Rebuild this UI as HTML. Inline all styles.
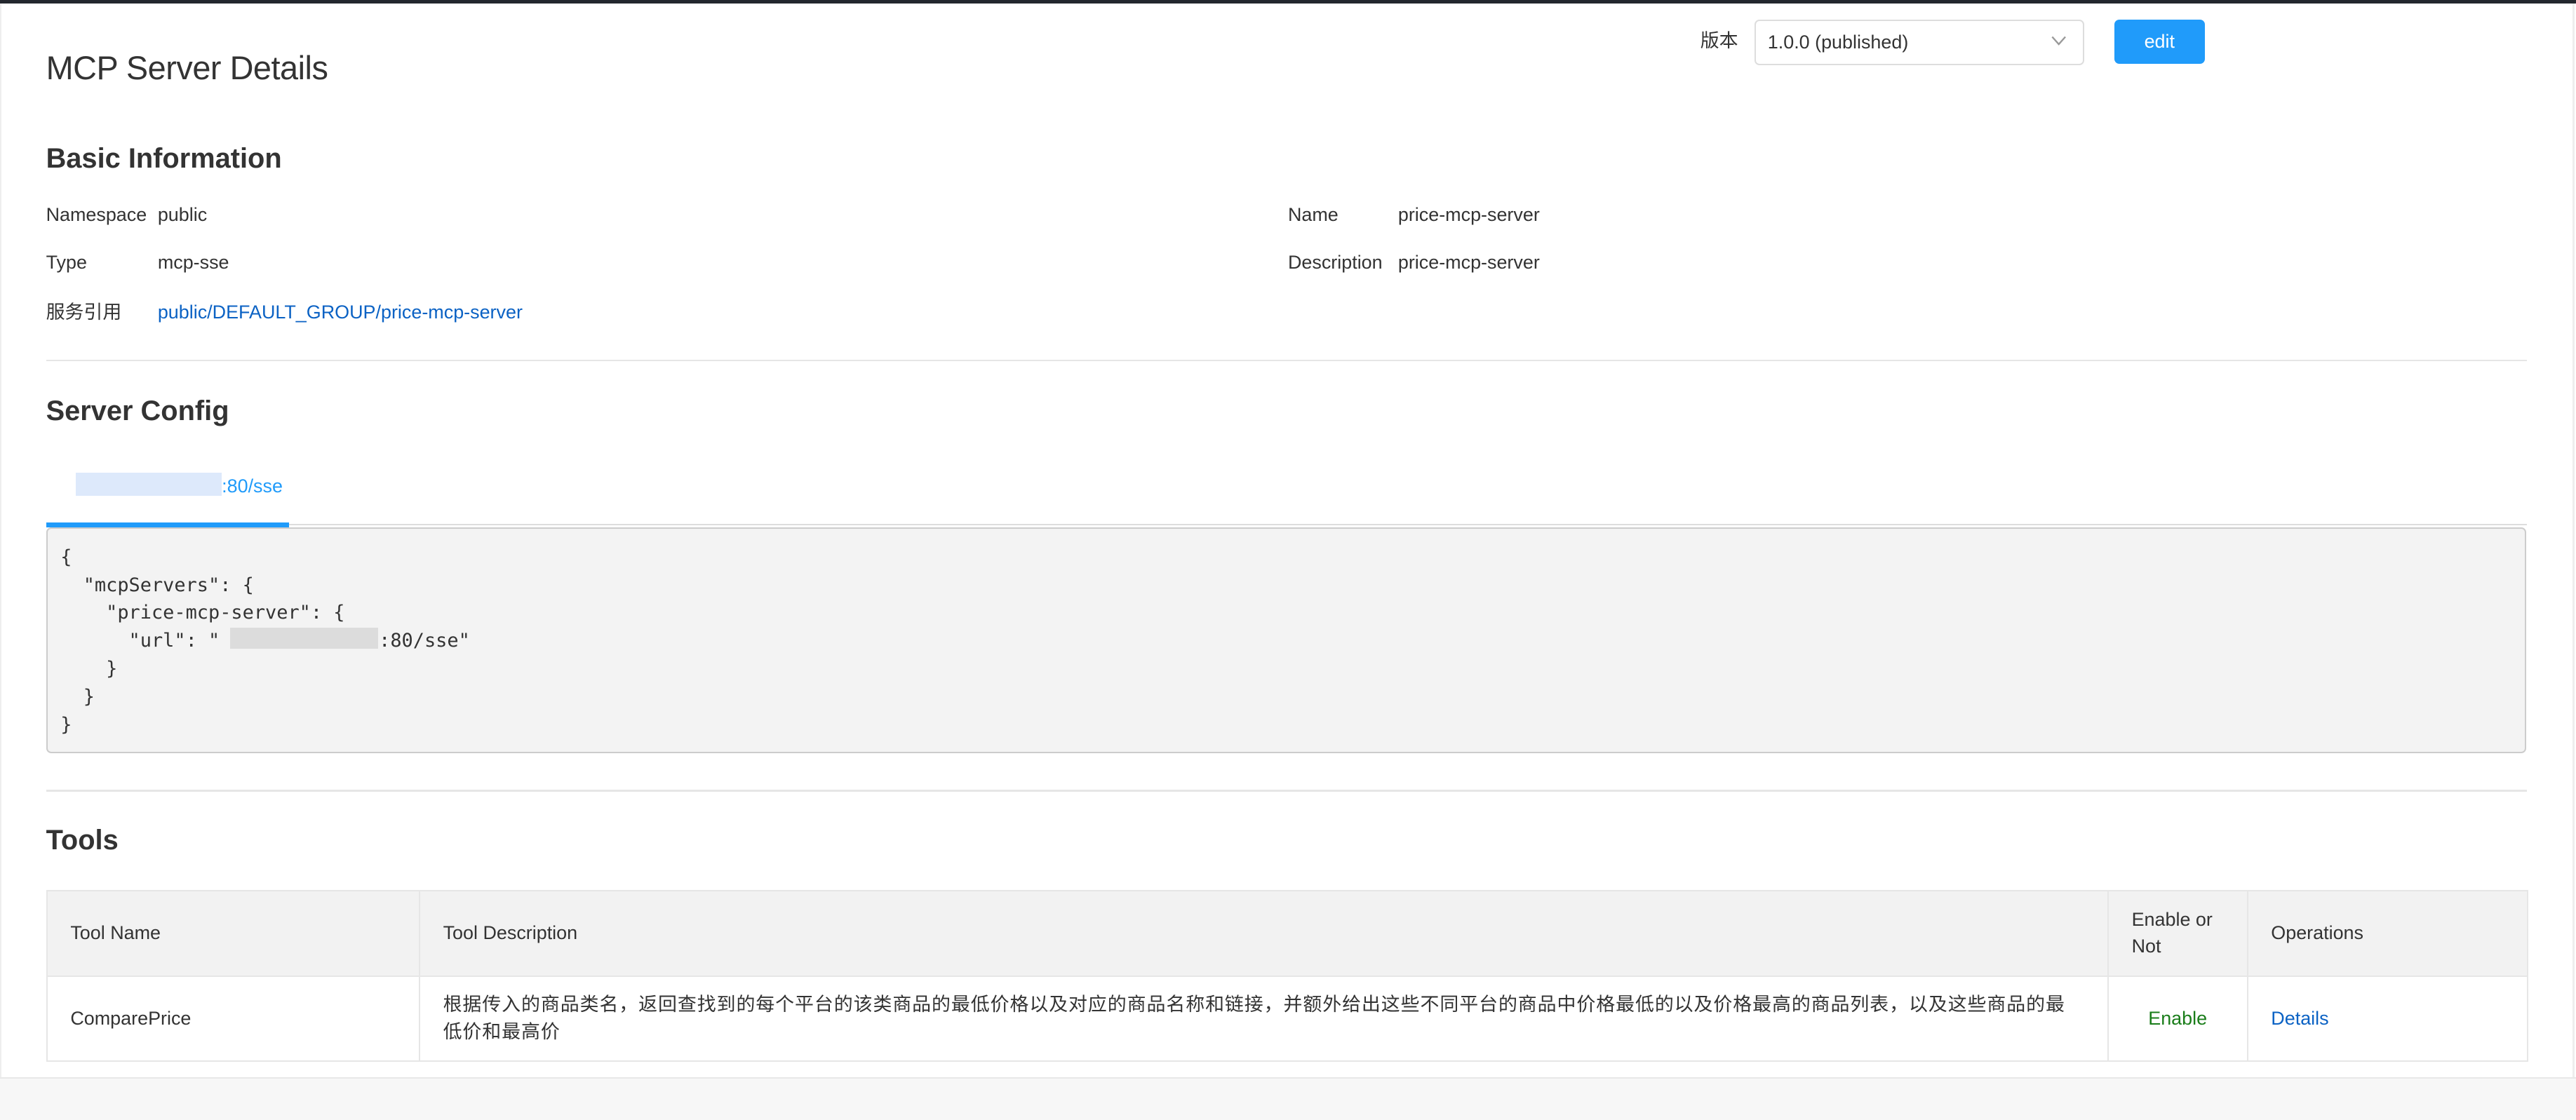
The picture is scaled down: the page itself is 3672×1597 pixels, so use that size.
<!DOCTYPE html>
<html><head><meta charset="utf-8"><style>
html,body{margin:0;padding:0;}
body{width:1568px;height:681px;zoom:2.3418;position:relative;overflow:hidden;background:#fff;font-family:"Liberation Sans","Noto Sans CJK SC",sans-serif;color:#333;}
.a{position:absolute;white-space:nowrap;}
.topbar{position:absolute;left:0;top:0;width:1568px;height:2px;background:#23272e;}
.lb{position:absolute;left:0;top:2px;width:1px;height:654px;background:#eee;}
.rb{position:absolute;left:1566px;top:2px;width:1px;height:654px;background:#eee;}
.t12{font-size:11.5px;line-height:14px;}
.hr{position:absolute;left:28px;width:1510px;height:1px;background:#e6e6e6;}
.code{position:absolute;left:28px;top:321px;width:1508px;height:136px;background:#f3f3f3;border:1px solid #ccc;border-radius:3px;}
.code pre{margin:0;position:absolute;left:8px;top:9px;font-family:"DejaVu Sans Mono","Liberation Mono",monospace;font-size:11.5px;line-height:17px;color:#333;}
table{position:absolute;left:28px;top:542px;width:1511px;border-collapse:collapse;font-size:11.5px;}
td{border:1px solid #e6e6e6;padding:0 14px;vertical-align:middle;}
tr.h td{background:#f2f2f2;height:51px;}
tr.b td{height:51px;}
</style></head><body>
<div class="topbar"></div><div class="lb"></div><div class="rb"></div>
<div class="a" style="left:28px;top:30px;font-size:20px;color:#333;letter-spacing:-0.2px;">MCP Server Details</div>
<div class="a t12" style="left:1035px;top:18px;">版本</div>
<div class="a" style="left:1068px;top:12px;width:199px;height:26px;border:1px solid #ddd;border-radius:3px;"></div>
<div class="a t12" style="left:1076px;top:19px;">1.0.0 (published)</div>
<svg class="a" style="left:1248px;top:21px" width="10" height="8"><path d="M1 1.5 L5 6 L9 1.5" fill="none" stroke="#999" stroke-width="1"/></svg>
<div class="a" style="left:1287px;top:12px;width:55px;height:27px;background:#209bfa;border-radius:3px;color:#fff;font-size:11.5px;text-align:center;line-height:27px;">edit</div>

<div class="a" style="left:28px;top:87px;font-size:17px;font-weight:bold;">Basic Information</div>
<div class="a t12" style="left:28px;top:124px;">Namespace</div><div class="a t12" style="left:96px;top:124px;">public</div>
<div class="a t12" style="left:28px;top:153px;">Type</div><div class="a t12" style="left:96px;top:153px;">mcp-sse</div>
<div class="a t12" style="left:28px;top:183px;">服务引用</div><div class="a t12" style="left:96px;top:183px;color:#0b62c4;">public/DEFAULT_GROUP/price-mcp-server</div>
<div class="a t12" style="left:784px;top:124px;">Name</div><div class="a t12" style="left:851px;top:124px;">price-mcp-server</div>
<div class="a t12" style="left:784px;top:153px;">Description</div><div class="a t12" style="left:851px;top:153px;">price-mcp-server</div>
<div class="hr" style="top:219px;"></div>

<div class="a" style="left:28px;top:241px;font-size:17px;font-weight:bold;">Server Config</div>
<div class="a" style="left:46px;top:288px;width:89px;height:14px;background:#dde9fb;"></div>
<div class="a t12" style="left:135px;top:289px;color:#209bfa;">:80/sse</div>
<div class="a" style="left:28px;top:319px;width:1510px;height:1px;background:#ddd;"></div>
<div class="a" style="left:28px;top:318px;width:148px;height:3px;background:#209bfa;"></div>
<div class="code"><pre>{
  "mcpServers": {
    "price-mcp-server": {
      "url": "              :80/sse"
    }
  }
}</pre></div>
<div class="a" style="left:140px;top:382px;width:90px;height:13px;background:#dcdcdc;"></div>

<div class="hr" style="top:481px;"></div>
<div class="a" style="left:28px;top:502px;font-size:17px;font-weight:bold;">Tools</div>
<table>
<tr class="h"><td style="width:198px">Tool Name</td><td style="width:999px">Tool Description</td><td style="width:56px;line-height:16px">Enable or Not</td><td>Operations</td></tr>
<tr class="b"><td>ComparePrice</td><td style="line-height:17px;white-space:normal;letter-spacing:0.4px">根据传入的商品类名，返回查找到的每个平台的该类商品的最低价格以及对应的商品名称和链接，并额外给出这些不同平台的商品中价格最低的以及价格最高的商品列表，以及这些商品的最低价和最高价</td><td style="color:#1a7d1a;text-align:center">Enable</td><td style="color:#0b62c4">Details</td></tr>
</table>
<div class="a" style="left:0;top:656px;width:1568px;height:25px;background:#f7f7f7;border-top:1px solid #e8e8e8;"></div>
</body></html>
